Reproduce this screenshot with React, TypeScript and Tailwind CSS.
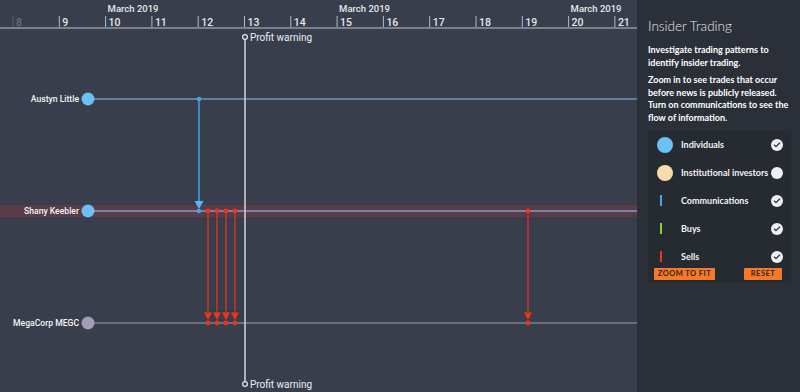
import { Check } from 'lucide-react'

const DAY_W = 46.3
const X0 = 13 // x of the "8" tick
const dayX = (d: number) => X0 + (d - 8) * DAY_W

const ROWS = [
  { name: 'Austyn Little', y: 99, node: '#6cc0f5', line: '#6d97bd' },
  { name: 'Shany Keebler', y: 211, node: '#6cc0f5', line: '#7aa0c4', focus: true },
  { name: 'MegaCorp MEGC', y: 323, node: '#a69bb9', line: '#7d7f8e' },
]

const SELLS = [208, 217, 226, 235, 528]

const LEGEND = [
  { label: 'Individuals', kind: 'node', color: '#6cc0f5', on: true },
  { label: 'Institutional investors', kind: 'node', color: '#f6dcaa', on: false },
  { label: 'Communications', kind: 'bar', color: '#3ea7e6', on: true },
  { label: 'Buys', kind: 'bar', color: '#86d52c', on: true },
  { label: 'Sells', kind: 'bar', color: '#f0341c', on: true },
]

const SVG_FONT = "Roboto, 'Liberation Sans', Arial, sans-serif"

function Arrow({ x, tip, color }: { x: number; tip: number; color: string }) {
  return (
    <polygon
      points={`${x - 4.5},${tip - 9} ${x + 4.5},${tip - 9} ${x},${tip}`}
      fill={color}
      stroke="#1f3d4a"
      strokeWidth={0.6}
    />
  )
}

function Timeline() {
  const days = Array.from({ length: 14 }, (_, i) => i + 8)
  return (
    <svg width={637} height={392} className="block shrink-0 bg-[#383e4b]">
      {/* highlight band for the selected row */}
      <rect x={0} y={205} width={637} height={12} fill="#5d3a47" />

      {/* axis */}
      {[10, 15, 20].map((d) => (
        <text key={d} x={dayX(d) + 2} y={12} fill="#e6e8ec" fontSize={9.5} fontWeight={500} fontFamily={SVG_FONT}>
          March 2019
        </text>
      ))}
      {days.map((d) => (
        <g key={d}>
          <line
            x1={dayX(d)}
            x2={dayX(d)}
            y1={16}
            y2={27}
            stroke={d === 8 ? '#59606c' : '#b4b9c2'}
            strokeWidth={1}
          />
          <text
            x={dayX(d) + 3}
            y={26}
            fill={d === 8 ? '#6b717c' : '#e6e8ec'}
            fontSize={10.5}
            fontWeight={500}
            fontFamily={SVG_FONT}
          >
            {d}
          </text>
        </g>
      ))}
      <rect x={0} y={27} width={637} height={2} fill="#7c828d" />

      {/* row lines */}
      {ROWS.map((r) => (
        <line key={r.name} x1={88} x2={637} y1={r.y} y2={r.y} stroke={r.line} strokeWidth={1.5} />
      ))}

      {/* profit warning marker */}
      <line x1={245} x2={245} y1={37} y2={384} stroke="#c9cdd4" strokeWidth={1.6} />
      {[37, 384].map((y) => (
        <g key={y}>
          <circle cx={245} cy={y} r={2.4} fill="#383e4b" stroke="#e8eaee" strokeWidth={1.2} />
          <text x={250} y={y + 3.5} fill="#eceef2" fontSize={10} fontFamily={SVG_FONT}>
            Profit warning
          </text>
        </g>
      ))}

      {/* communication */}
      <line x1={199} x2={199} y1={99} y2={202} stroke="#3ea7e6" strokeWidth={1.5} />
      <polygon points="194.5,201 203.5,201 199,209" fill="#56b9f0" />
      <circle cx={199} cy={99} r={2.3} fill="#3ea7e6" />
      <circle cx={199} cy={211} r={2.3} fill="#3ea7e6" />

      {/* sells */}
      {SELLS.map((x) => (
        <g key={x}>
          <line x1={x} x2={x} y1={211} y2={313} stroke="#1f3d4a" strokeWidth={2.6} />
          <line x1={x} x2={x} y1={211} y2={313} stroke="#e9351f" strokeWidth={1.4} />
          <Arrow x={x} tip={321} color="#f0341c" />
          <circle cx={x} cy={211} r={2.4} fill="#f0341c" />
          <circle cx={x} cy={323} r={2.4} fill="#f0341c" />
        </g>
      ))}

      {/* nodes and labels */}
      {ROWS.map((r) => (
        <g key={r.name}>
          <circle cx={88} cy={r.y} r={6.5} fill={r.node} />
          <text
            x={79}
            y={r.y + 3.2}
            textAnchor="end"
            fill="#f4f5f7"
            fontSize={8.6}
            fontWeight={500}
            fontFamily={SVG_FONT}
          >
            {r.name}
          </text>
        </g>
      ))}
    </svg>
  )
}

function Panel() {
  return (
    <aside className="flex h-[392px] w-[163px] shrink-0 flex-col bg-[#2b2f37] pl-[11px] pr-[6px] pt-[16px] font-['Lato',sans-serif] text-white">
      <h1 className="text-[13.5px] font-light leading-5 text-[#e9ebee]">Insider Trading</h1>
      <p className="mt-[7px] text-[9px] font-bold leading-[13px]">
        Investigate trading patterns to identify insider trading.
      </p>
      <p className="mt-[5px] text-[9px] font-bold leading-[12.7px]">
        Zoom in to see trades that occur before news is publicly released. Turn on communications to see the
        flow of information.
      </p>
      <div className="mt-[6px] mr-[3px] flex flex-col bg-[#262a31] pb-[3px] pl-[9px] pr-[8px]">
        {LEGEND.map((item) => (
          <div key={item.label} className="flex h-[28px] items-center">
            <div className="flex w-[24px] items-center">
              {item.kind === 'node' ? (
                <span className="block h-[16px] w-[16px] rounded-full" style={{ background: item.color }} />
              ) : (
                <span className="ml-[3px] block h-[11px] w-[2px]" style={{ background: item.color }} />
              )}
            </div>
            <span className="flex-1 text-[9px] font-bold text-[#f1f2f4]">{item.label}</span>
            <span className="flex h-[12px] w-[12px] items-center justify-center rounded-full bg-[#eef0f3]">
              {item.on && <Check size={8} strokeWidth={3.5} color="#262a31" />}
            </span>
          </div>
        ))}
        <div className="mt-[-3px] flex justify-between pr-[1px]">
          <button className="-ml-[3px] h-[12px] w-[61px] rounded-[1px] bg-[#f47a2a] text-[7.5px] font-bold leading-[12px] tracking-[0.06em] text-[#3a2214]">
            ZOOM TO FIT
          </button>
          <button className="h-[12px] w-[38px] rounded-[1px] bg-[#f47a2a] text-[7.5px] font-bold leading-[12px] tracking-[0.06em] text-[#3a2214]">
            RESET
          </button>
        </div>
      </div>
    </aside>
  )
}

export default function App() {
  return (
    <div className="flex h-[392px] w-[800px] overflow-hidden bg-[#383e4b]">
      <Timeline />
      <Panel />
    </div>
  )
}
